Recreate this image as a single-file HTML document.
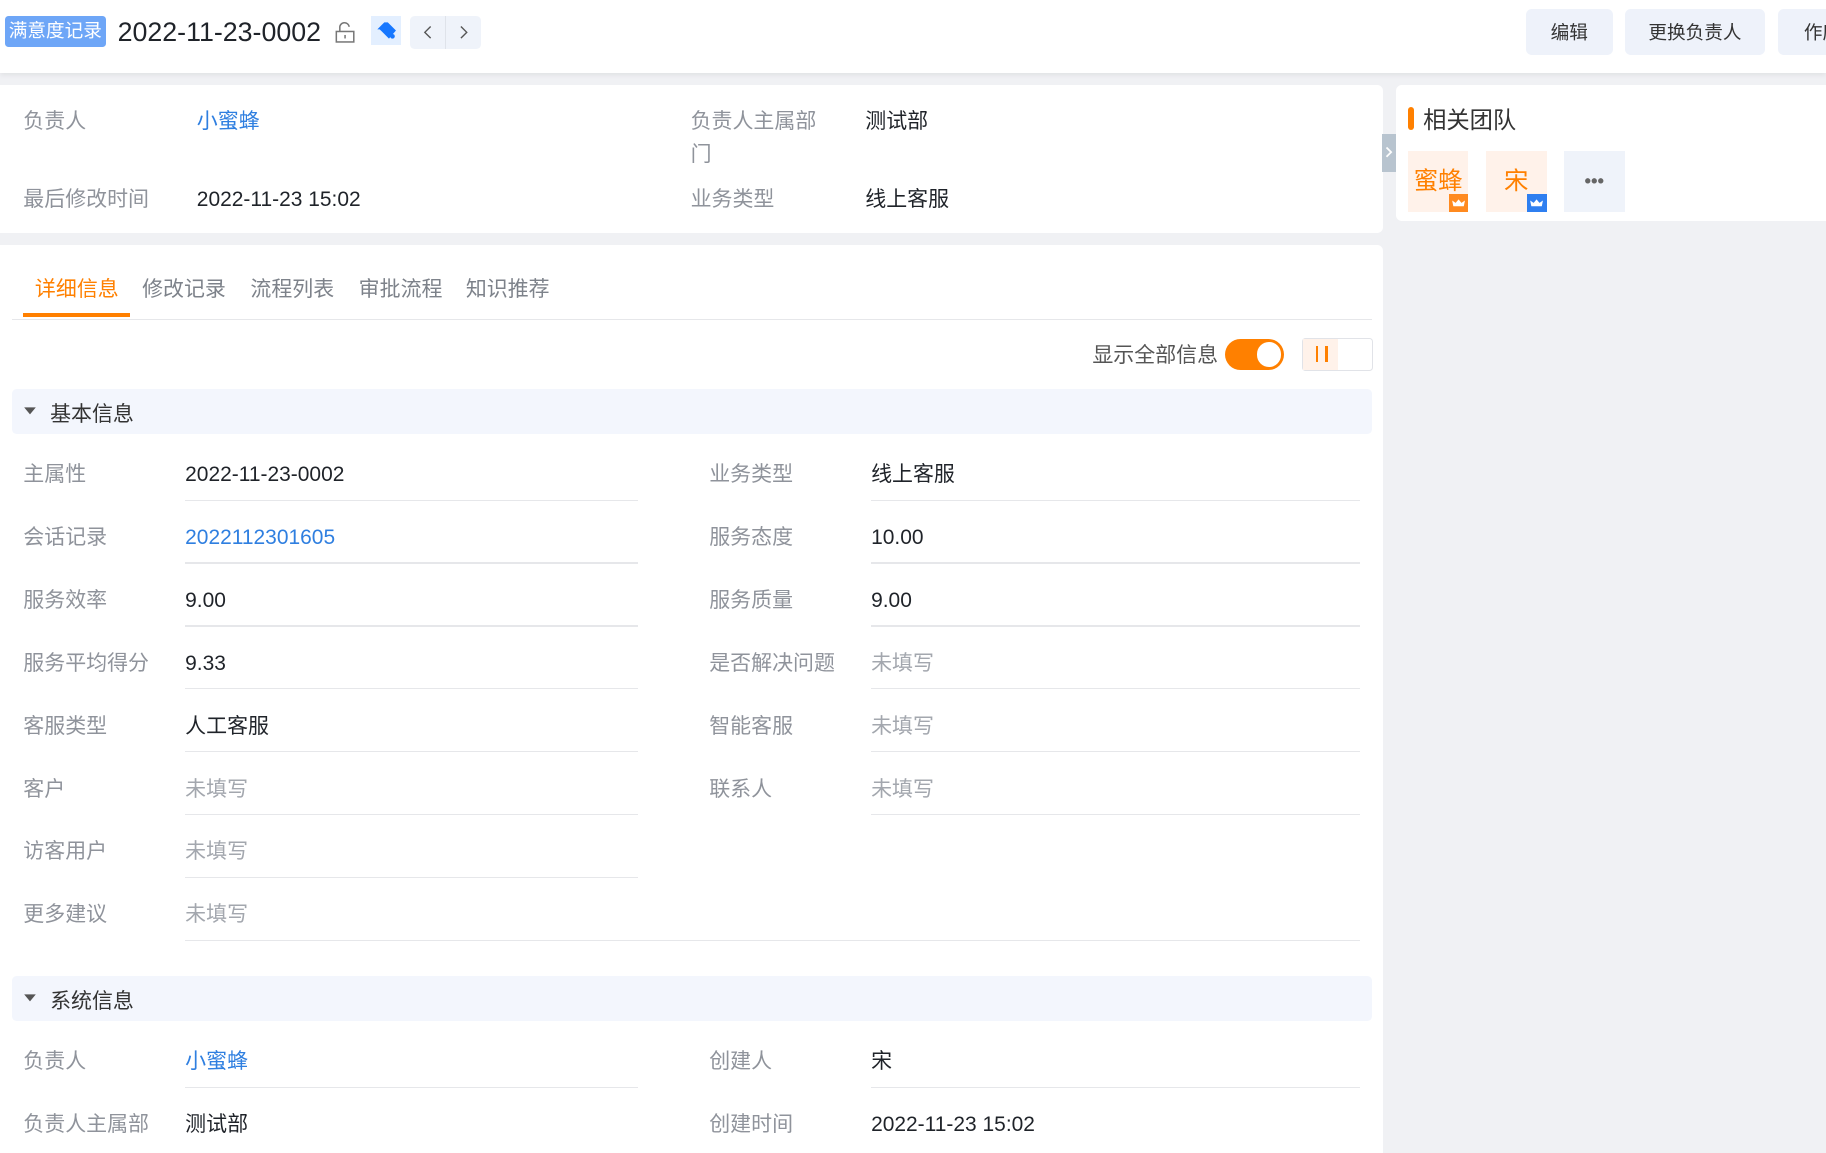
<!DOCTYPE html>
<html><head><meta charset="utf-8"><style>
html,body{margin:0;padding:0;}
body{width:1826px;height:1141px;overflow:hidden;background:#f0f1f4;font-family:"Liberation Sans","Noto Sans CJK SC",sans-serif;}
#z{zoom:1.16454;position:relative;width:1568px;height:980px;}
.a{position:absolute;white-space:nowrap;}
.t{line-height:24px;font-size:18px;margin-top:2px;}
.l{color:#8f939b;}
.v{color:#1f2329;}
.b{color:#2f7fe0;}
.e{color:#a3a7ae;}
.ln{position:absolute;height:1px;background:#e6e7ea;}
</style></head><body><div id="z">
<div class="a" style="left:0;top:0;width:1568px;height:63px;background:#fff;box-shadow:0 2px 4px rgba(0,0,0,.06)"></div>
<div class="a" style="left:4px;top:14px;width:87px;height:26px;background:#6ea6f7;border-radius:3px;color:#fff;font-size:16px;line-height:26px;text-align:center">满意度记录</div>
<div class="a" style="left:101px;top:14px;font-size:23px;line-height:28px;color:#1f2329">2022-11-23-0002</div>
<svg class="a" style="left:287px;top:18px" width="20" height="20" viewBox="0 0 20 20"><rect x="2" y="9" width="15" height="9" fill="none" stroke="#777" stroke-width="1.3"/><path d="M5 9V6a4 4 0 0 1 8-1" fill="none" stroke="#777" stroke-width="1.3"/><line x1="9.5" y1="12" x2="9.5" y2="15" stroke="#777" stroke-width="1.3"/></svg>
<div class="a" style="left:319px;top:14px;width:25px;height:25px;background:#e3efff"></div>
<svg class="a" style="left:322px;top:17px" width="20" height="20" viewBox="0 0 20 20"><path d="M2 8L8 2h3l7 7-6 7-8-8z" fill="#1677ff"/><circle cx="15" cy="14" r="2" fill="#1677ff"/></svg>
<div class="a" style="left:352px;top:14px;width:61px;height:28px;background:#eff3fa;border-radius:4px"></div>
<div class="a" style="left:382px;top:14px;width:1px;height:28px;background:#dfe3ea"></div>
<svg class="a" style="left:360px;top:20px" width="50" height="16" viewBox="0 0 50 16"><path d="M10 3L5 8l5 5" fill="none" stroke="#555" stroke-width="1.2"/><path d="M36 3l5 5-5 5" fill="none" stroke="#555" stroke-width="1.2"/></svg>
<div class="a" style="left:1310px;top:8px;width:75px;height:39px;background:#eef2fa;border-radius:5px;text-align:center;line-height:41px;font-size:16px;color:#333">编辑</div>
<div class="a" style="left:1395px;top:8px;width:121px;height:39px;background:#eef2fa;border-radius:5px;text-align:center;line-height:41px;font-size:16px;color:#333">更换负责人</div>
<div class="a" style="left:1527px;top:8px;width:60px;height:39px;background:#eef2fa;border-radius:5px;line-height:41px;font-size:16px;color:#333;padding-left:22px;box-sizing:border-box">作废</div>
<div class="a" style="left:0;top:73px;width:1188px;height:127px;background:#fff;border-radius:0 5px 5px 0"></div>
<div class="a t l" style="left:20px;top:91px">负责人</div>
<div class="a t b" style="left:169px;top:91px">小蜜蜂</div>
<div class="a t l" style="left:593px;top:91px">负责人主属部</div>
<div class="a t l" style="left:593px;top:119px">门</div>
<div class="a t v" style="left:743px;top:91px">测试部</div>
<div class="a t l" style="left:20px;top:158px">最后修改时间</div>
<div class="a t v" style="left:169px;top:158px">2022-11-23 15:02</div>
<div class="a t l" style="left:593px;top:158px">业务类型</div>
<div class="a t v" style="left:743px;top:158px">线上客服</div>
<div class="a" style="left:1187px;top:115px;width:12px;height:33px;background:#b8c4cf"></div>
<svg class="a" style="left:1188px;top:124px" width="10" height="14" viewBox="0 0 10 14"><path d="M3 3l4 4-4 4" fill="none" stroke="#fff" stroke-width="1.5"/></svg>
<div class="a" style="left:1199px;top:73px;width:380px;height:117px;background:#fff;border-radius:5px"></div>
<div class="a" style="left:1209px;top:92px;width:5px;height:20px;background:#ff8000;border-radius:3px"></div>
<div class="a" style="left:1222px;top:89px;font-size:20px;line-height:28px;color:#333">相关团队</div>
<div class="a" style="left:1209px;top:130px;width:52px;height:52px;background:#fff2ea;color:#ff8000;font-size:21px;line-height:54px;text-align:center">蜜蜂</div>
<div class="a" style="left:1244px;top:167px;width:17px;height:15px;background:#ff8a1f"></div>
<div class="a" style="left:1276px;top:130px;width:52px;height:52px;background:#fff2ea;color:#ff8000;font-size:21px;line-height:54px;text-align:center">宋</div>
<div class="a" style="left:1311px;top:167px;width:17px;height:15px;background:#2f7ff0"></div>
<svg class="a" style="left:1246px;top:169px" width="13" height="11" viewBox="0 0 13 11"><path d="M2 8L1 3l3 2 2.5-3L9 5l3-2-1 5z" fill="#fff"/></svg>
<svg class="a" style="left:1313px;top:169px" width="13" height="11" viewBox="0 0 13 11"><path d="M2 8L1 3l3 2 2.5-3L9 5l3-2-1 5z" fill="#fff"/></svg>
<div class="a" style="left:1343px;top:130px;width:52px;height:52px;background:#eff3fa;color:#666;font-size:16px;line-height:52px;text-align:center;font-weight:bold">•••</div>
<div class="a" style="left:0;top:210px;width:1188px;height:780px;background:#fff;border-radius:0 5px 0 0"></div>
<div class="a" style="left:30px;top:237px;font-size:18px;line-height:24px;color:#ff8000">详细信息</div>
<div class="a" style="left:122px;top:237px;font-size:18px;line-height:24px;color:#7d828a">修改记录</div>
<div class="a" style="left:215px;top:237px;font-size:18px;line-height:24px;color:#7d828a">流程列表</div>
<div class="a" style="left:308px;top:237px;font-size:18px;line-height:24px;color:#7d828a">审批流程</div>
<div class="a" style="left:400px;top:237px;font-size:18px;line-height:24px;color:#7d828a">知识推荐</div>
<div class="ln" style="left:10px;top:274px;width:1168px"></div>
<div class="a" style="left:20px;top:269px;width:92px;height:3px;background:#ff8000"></div>
<div class="a t" style="left:938px;top:292px;color:#555">显示全部信息</div>
<div class="a" style="left:1052px;top:291px;width:51px;height:27px;background:#ff8000;border-radius:14px"></div>
<div class="a" style="left:1079px;top:294px;width:21px;height:21px;background:#fff;border-radius:50%"></div>
<div class="a" style="left:1118px;top:290px;width:59px;height:27px;border:1px solid #e1e3e8;border-radius:3px;background:#fff"></div>
<div class="a" style="left:1119px;top:291px;width:30px;height:27px;background:#fff2ea"></div>
<div class="a" style="left:1130px;top:297px;width:2px;height:14px;background:#ff8000"></div>
<div class="a" style="left:1138px;top:297px;width:2px;height:14px;background:#ff8000"></div>
<div class="a" style="left:10px;top:334px;width:1168px;height:39px;background:#f3f6fd;border-radius:4px"></div>
<svg class="a" style="left:20px;top:348px" width="12" height="10" viewBox="0 0 12 10"><path d="M1 2h10L6 8z" fill="#555"/></svg>
<div class="a t" style="left:43px;top:342px;color:#333">基本信息</div>

<div class="a t l" style="left:20px;top:394px">主属性</div><div class="a t v" style="left:159px;top:394px">2022-11-23-0002</div><div class="ln" style="left:159px;top:429px;width:389px"></div>
<div class="a t l" style="left:609px;top:394px">业务类型</div><div class="a t v" style="left:748px;top:394px">线上客服</div><div class="ln" style="left:748px;top:429px;width:420px"></div>

<div class="a t l" style="left:20px;top:448px">会话记录</div><div class="a t b" style="left:159px;top:448px">2022112301605</div><div class="ln" style="left:159px;top:483px;width:389px"></div>
<div class="a t l" style="left:609px;top:448px">服务态度</div><div class="a t v" style="left:748px;top:448px">10.00</div><div class="ln" style="left:748px;top:483px;width:420px"></div>

<div class="a t l" style="left:20px;top:502px">服务效率</div><div class="a t v" style="left:159px;top:502px">9.00</div><div class="ln" style="left:159px;top:537px;width:389px"></div>
<div class="a t l" style="left:609px;top:502px">服务质量</div><div class="a t v" style="left:748px;top:502px">9.00</div><div class="ln" style="left:748px;top:537px;width:420px"></div>

<div class="a t l" style="left:20px;top:556px">服务平均得分</div><div class="a t v" style="left:159px;top:556px">9.33</div><div class="ln" style="left:159px;top:591px;width:389px"></div>
<div class="a t l" style="left:609px;top:556px">是否解决问题</div><div class="a t e" style="left:748px;top:556px">未填写</div><div class="ln" style="left:748px;top:591px;width:420px"></div>

<div class="a t l" style="left:20px;top:610px">客服类型</div><div class="a t v" style="left:159px;top:610px">人工客服</div><div class="ln" style="left:159px;top:645px;width:389px"></div>
<div class="a t l" style="left:609px;top:610px">智能客服</div><div class="a t e" style="left:748px;top:610px">未填写</div><div class="ln" style="left:748px;top:645px;width:420px"></div>

<div class="a t l" style="left:20px;top:664px">客户</div><div class="a t e" style="left:159px;top:664px">未填写</div><div class="ln" style="left:159px;top:699px;width:389px"></div>
<div class="a t l" style="left:609px;top:664px">联系人</div><div class="a t e" style="left:748px;top:664px">未填写</div><div class="ln" style="left:748px;top:699px;width:420px"></div>

<div class="a t l" style="left:20px;top:718px">访客用户</div><div class="a t e" style="left:159px;top:718px">未填写</div><div class="ln" style="left:159px;top:753px;width:389px"></div>

<div class="a t l" style="left:20px;top:772px">更多建议</div><div class="a t e" style="left:159px;top:772px">未填写</div><div class="ln" style="left:159px;top:807px;width:1009px"></div>
<div class="a" style="left:10px;top:838px;width:1168px;height:39px;background:#f3f6fd;border-radius:4px"></div>
<svg class="a" style="left:20px;top:852px" width="12" height="10" viewBox="0 0 12 10"><path d="M1 2h10L6 8z" fill="#555"/></svg>
<div class="a t" style="left:43px;top:846px;color:#333">系统信息</div>
<div class="a t l" style="left:20px;top:898px">负责人</div><div class="a t b" style="left:159px;top:898px">小蜜蜂</div><div class="ln" style="left:159px;top:933px;width:389px"></div>
<div class="a t l" style="left:609px;top:898px">创建人</div><div class="a t v" style="left:748px;top:898px">宋</div><div class="ln" style="left:748px;top:933px;width:420px"></div>
<div class="a t l" style="left:20px;top:952px">负责人主属部</div><div class="a t v" style="left:159px;top:952px">测试部</div>
<div class="a t l" style="left:609px;top:952px">创建时间</div><div class="a t v" style="left:748px;top:952px">2022-11-23 15:02</div>
</div></body></html>
